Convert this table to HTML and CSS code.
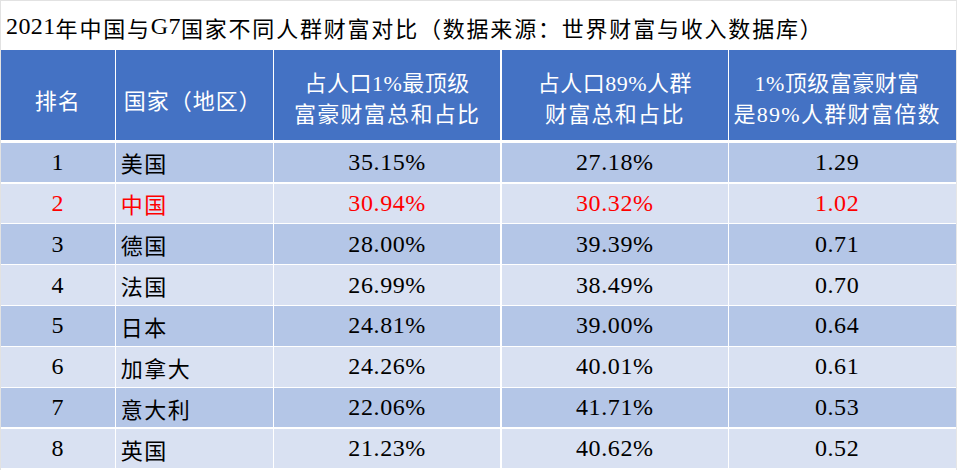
FILE: index.html
```html
<!DOCTYPE html>
<html lang="zh-CN">
<head>
<meta charset="utf-8">
<title>2021年中国与G7国家不同人群财富对比</title>
<link rel="stylesheet" href="styles.css">
</head>
<body>
<div class="sheet">
  <div class="title"><span class="num">2021</span>年中国与<span class="num">G7</span>国家不同人群财富对比（数据来源：世界财富与收入数据库）</div>
  <div class="table">
    <div class="row head">
      <div class="cell c">排名</div>
      <div class="cell l">国家（地区）</div>
      <div class="cell c two"><span class="l1">占人口1%最顶级</span><span class="l2">富豪财富总和占比</span></div>
      <div class="cell c two"><span class="l1">占人口89%人群</span><span class="l2">财富总和占比</span></div>
      <div class="cell c two last"><span class="l1">1%顶级富豪财富</span><span class="l2">是89%人群财富倍数</span></div>
    </div>
    <div class="row odd">
      <div class="cell c num">1</div><div class="cell l">美国</div><div class="cell c num">35.15%</div><div class="cell c num">27.18%</div><div class="cell c num last">1.29</div>
    </div>
    <div class="row even red">
      <div class="cell c num">2</div><div class="cell l">中国</div><div class="cell c num">30.94%</div><div class="cell c num">30.32%</div><div class="cell c num last">1.02</div>
    </div>
    <div class="row odd">
      <div class="cell c num">3</div><div class="cell l">德国</div><div class="cell c num">28.00%</div><div class="cell c num">39.39%</div><div class="cell c num last">0.71</div>
    </div>
    <div class="row even">
      <div class="cell c num">4</div><div class="cell l">法国</div><div class="cell c num">26.99%</div><div class="cell c num">38.49%</div><div class="cell c num last">0.70</div>
    </div>
    <div class="row odd">
      <div class="cell c num">5</div><div class="cell l">日本</div><div class="cell c num">24.81%</div><div class="cell c num">39.00%</div><div class="cell c num last">0.64</div>
    </div>
    <div class="row even">
      <div class="cell c num">6</div><div class="cell l">加拿大</div><div class="cell c num">24.26%</div><div class="cell c num">40.01%</div><div class="cell c num last">0.61</div>
    </div>
    <div class="row odd">
      <div class="cell c num">7</div><div class="cell l">意大利</div><div class="cell c num">22.06%</div><div class="cell c num">41.71%</div><div class="cell c num last">0.53</div>
    </div>
    <div class="row even">
      <div class="cell c num">8</div><div class="cell l">英国</div><div class="cell c num">21.23%</div><div class="cell c num">40.62%</div><div class="cell c num last">0.52</div>
    </div>
  </div>
</div>
</body>
</html>
```
FILE: styles.css
```css
html, body {
  margin: 0;
  padding: 0;
  background: #ffffff;
}

body {
  font-family: "Liberation Serif", "Noto Sans CJK SC", serif;
  font-size: 22px;
  color: #000000;
  overflow: hidden;
}

.sheet {
  width: 957px;
  height: 470px;
  box-sizing: border-box;
  border-top: 1px solid #e2e2e2;
  border-left: 1px solid #e2e2e2;
  border-right: 1px solid #e6e6e6;
  overflow: hidden;
}

.title {
  height: 49px;
  display: flex;
  align-items: center;
  padding-left: 5px;
  padding-top: 2px;
  box-sizing: border-box;
  letter-spacing: 1.8px;
  white-space: nowrap;
}

.title .num {
  font-size: 24px;
  letter-spacing: 0.4px;
}

.table {
  display: flex;
  flex-direction: column;
  gap: 1.5px;
}

.row {
  display: grid;
  grid-template-columns: 113.5px 157px 226.5px 226.5px 1fr;
  column-gap: 1.2px;
  height: 39.4px;
}

.row.head {
  height: 89.5px;
  margin-bottom: 1.7px;
  color: #ffffff;
}

.cell {
  display: flex;
  align-items: center;
  letter-spacing: 1.5px;
  white-space: nowrap;
}

.cell.num {
  font-size: 24px;
  letter-spacing: 0.6px;
}

.cell.c {
  justify-content: center;
}

.cell.l {
  padding-left: 5px;
}

.cell.last {
  padding-right: 11px;
}

.head .cell {
  background: #4472c4;
  padding-top: 8px;
  box-sizing: border-box;
  letter-spacing: 1px;
}

.head .cell.l {
  padding-left: 8px;
}

.cell.two {
  flex-direction: column;
  line-height: 31px;
}

.cell.two .l1 {
  letter-spacing: 0.5px;
}

.cell.two .l2 {
  letter-spacing: 1.3px;
}

.odd .cell {
  background: #b4c6e7;
}

.even .cell {
  background: #d9e1f2;
}

.red {
  color: #ff0000;
}
```
